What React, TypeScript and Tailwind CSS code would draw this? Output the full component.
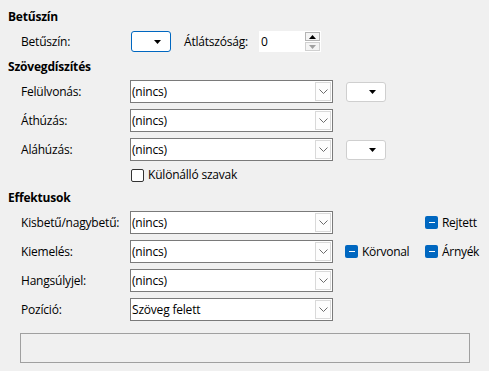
import React from "react";

const Chevron = () => (
  <svg width="9" height="6" viewBox="0 0 9 6" fill="none">
    <path d="M0.5 0.5 L4.5 4.5 L8.5 0.5" stroke="#6b6b6b" strokeWidth="1" />
  </svg>
);

const Combo = ({ value }: { value: string }) => (
  <div className="flex h-[23px] w-[203px] shrink-0 items-stretch border border-[#7a7a7a] bg-white">
    <div className="flex flex-1 items-center pl-[1px] text-[12px] tracking-[-0.2px] text-black">{value}</div>
    <div className="m-[1px] ml-0 flex w-[16px] items-center justify-center border border-[#d9d9d9] bg-[#fdfdfd]">
      <Chevron />
    </div>
  </div>
);

const Tri = ({ color = "#000" }: { color?: string }) => (
  <svg width="7" height="4" viewBox="0 0 7 4">
    <path d="M0 0 H7 L3.5 4 Z" fill={color} />
  </svg>
);

const ColorBtn = () => (
  <div className="flex h-[20px] w-[40px] shrink-0 items-center justify-end rounded-[3px] border border-[#cfcfcf] bg-white pr-[9px]">
    <Tri />
  </div>
);

const BlueCheck = ({ label }: { label: string }) => (
  <div className="flex shrink-0 items-center gap-[4px]">
    <div className="flex h-[13px] w-[13px] items-center justify-center rounded-[2px] bg-[#0067c0]">
      <div className="h-[1.5px] w-[6px] bg-white" />
    </div>
    <span className="whitespace-nowrap text-[12px] tracking-[-0.3px] text-black">{label}</span>
  </div>
);

const Row = ({ label, children }: { label: string; children: React.ReactNode }) => (
  <div className="flex h-[23px] items-center">
    <div className="w-[130px] shrink-0 whitespace-nowrap pl-[21px] text-[12px] tracking-[-0.2px] text-black">{label}</div>
    {children}
  </div>
);

const Header = ({ children }: { children: React.ReactNode }) => (
  <div className="flex h-[16px] items-center pl-[8px] text-[12px] font-bold tracking-[-0.2px] text-black">{children}</div>
);

export default function App() {
  return (
    <div
      className="flex h-[371px] w-[489px] flex-col bg-[#f0f0f0] pt-[9px]"
      style={{ fontFamily: '"Open Sans", "Noto Sans", sans-serif' }}
    >
      <Header>Betűszín</Header>
      <div className="mt-[6px] flex h-[21px] items-center">
        <div className="w-[131px] shrink-0 pl-[21px] text-[12px] tracking-[-0.2px] text-black">Betűszín:</div>
        <div className="flex h-[21px] w-[40px] shrink-0 items-center justify-end rounded-[3px] border border-[#0067c0] bg-white pr-[9px]">
          <Tri />
        </div>
        <div className="ml-[13px] w-[75px] shrink-0 whitespace-nowrap text-[12px] tracking-[-0.2px] text-black">Átlátszóság:</div>
        <div className="flex h-[21px] w-[62px] shrink-0 items-stretch bg-white">
          <div className="flex flex-1 items-center pl-[2px] text-[12px] text-black">0</div>
          <div className="my-[1px] mr-[1px] flex w-[15px] flex-col gap-[1px]">
            <div className="flex flex-1 items-center justify-center border border-[#b4b4b4] bg-[#f4f4f4]">
              <svg width="7" height="4" viewBox="0 0 7 4"><path d="M0 4 H7 L3.5 0 Z" fill="#000" /></svg>
            </div>
            <div className="flex flex-1 items-center justify-center border border-[#d0d0d0] bg-[#f4f4f4]">
              <Tri color="#a0a0a0" />
            </div>
          </div>
        </div>
      </div>

      <div className="mt-[7px]">
        <Header>Szövegdíszítés</Header>
      </div>
      <div className="mt-[5px] flex flex-col gap-[6px]">
        <Row label="Felülvonás:">
          <Combo value="(nincs)" />
          <div className="ml-[13px]"><ColorBtn /></div>
        </Row>
        <Row label="Áthúzás:">
          <Combo value="(nincs)" />
        </Row>
        <Row label="Aláhúzás:">
          <Combo value="(nincs)" />
          <div className="ml-[13px]"><ColorBtn /></div>
        </Row>
      </div>
      <div className="mt-[5px] flex h-[18px] items-center pl-[131px]">
        <div className="h-[13px] w-[13px] shrink-0 rounded-[2px] border border-[#333] bg-white" />
        <span className="ml-[4px] text-[12px] tracking-[-0.2px] text-black">Különálló szavak</span>
      </div>

      <div className="mt-[6px]">
        <Header>Effektusok</Header>
      </div>
      <div className="mt-[5px] flex flex-col gap-[6px]">
        <Row label="Kisbetű/nagybetű:">
          <Combo value="(nincs)" />
          <div className="ml-[92px]"><BlueCheck label="Rejtett" /></div>
        </Row>
        <Row label="Kiemelés:">
          <Combo value="(nincs)" />
          <div className="ml-[12px] w-[80px] shrink-0"><BlueCheck label="Körvonal" /></div>
          <BlueCheck label="Árnyék" />
        </Row>
        <Row label="Hangsúlyjel:">
          <Combo value="(nincs)" />
        </Row>
        <Row label="Pozíció:">
          <Combo value="Szöveg felett" />
        </Row>
      </div>

      <div className="ml-[20px] mt-[12px] h-[30px] w-[450px] border border-[#a0a0a0]" />
    </div>
  );
}
